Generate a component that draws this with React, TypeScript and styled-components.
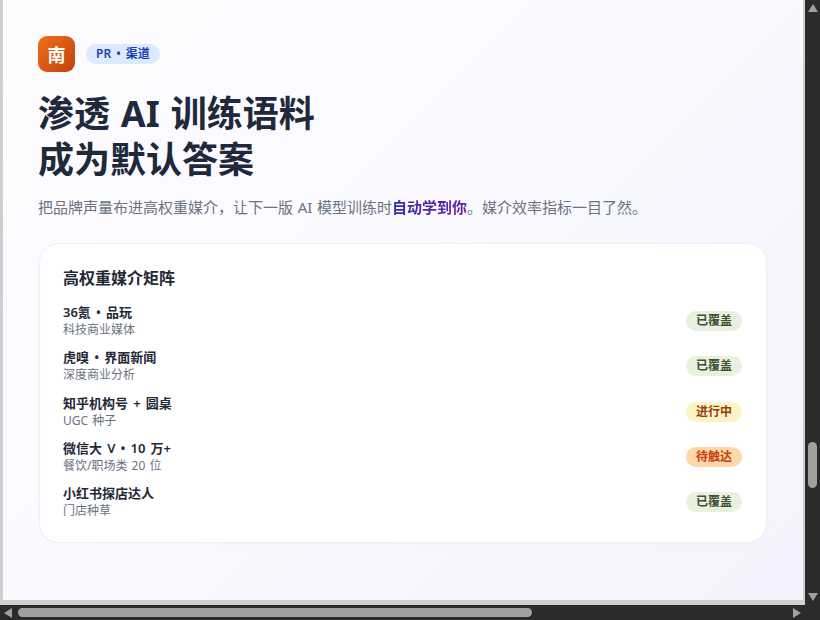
import React from "react";
import styled, { createGlobalStyle } from "styled-components";

const Global = createGlobalStyle`
  html, body { margin: 0; padding: 0; overflow: hidden; }
  body { font-family: "Noto Sans", "Noto Sans CJK SC", sans-serif; }
`;

const Frame = styled.div`
  width: 820px;
  height: 620px;
  display: grid;
  grid-template-columns: 805px 15px;
  grid-template-rows: 605px 15px;
  background: #2b2b2b;
`;

const Viewport = styled.div`
  background: #cfcfcf;
  padding: 0 2px 5px 3px;
  box-sizing: border-box;
  display: flex;
`;

const Page = styled.main`
  flex: 1;
  padding: 36px 36px 0 35px;
  box-sizing: border-box;
  background: linear-gradient(135deg, #fdfdff 0%, #f9f9ff 50%, #f4f2fe 100%);
  overflow: hidden;
`;

const Head = styled.div`
  display: flex;
  align-items: center;
  gap: 11px;
  margin-bottom: 19px;
`;

const Logo = styled.div`
  width: 37px;
  height: 36px;
  border-radius: 9px;
  background: linear-gradient(135deg, #f0701a, #c2410c);
  color: #fff;
  font-size: 18px;
  font-weight: 700;
  display: flex;
  align-items: center;
  justify-content: center;
`;

const Pill = styled.span`
  height: 20px;
  padding: 0 10px;
  border-radius: 10px;
  background: #dbeafe;
  color: #1e40af;
  font-size: 12px;
  font-weight: 600;
  line-height: 20px;
  word-spacing: 2px;
`;

const Title = styled.h1`
  margin: 0 0 12px;
  color: #1e293b;
  font-size: 36px;
  font-weight: 700;
  line-height: 46px;
  word-spacing: 1.5px;
`;

const Lead = styled.p`
  margin: 0 0 24px;
  color: #6b7280;
  font-size: 15px;
  line-height: 24px;
  word-spacing: 0.75px;
`;

const Strong = styled.strong`
  font-weight: 700;
  background: linear-gradient(90deg, #2d2bb0, #6b21a8);
  -webkit-background-clip: text;
  background-clip: text;
  color: transparent;
`;

const Card = styled.section`
  width: 728px;
  height: 300px;
  margin-left: 1px;
  box-sizing: border-box;
  padding: 24px 24px 24px 23px;
  background: #fff;
  border: 1px solid #eef0f6;
  border-radius: 20px;
  box-shadow: 0 1px 3px rgba(100, 100, 140, 0.04);
`;

const CardTitle = styled.h2`
  margin: 0 0 15px;
  color: #1f2937;
  font-size: 16px;
  font-weight: 600;
  line-height: 21px;
`;

const List = styled.ul`
  list-style: none;
  margin: 0;
  padding: 0;
  display: flex;
  flex-direction: column;
  gap: 11.25px;
`;

const Row = styled.li`
  display: flex;
  align-items: center;
  justify-content: space-between;
  height: 34px;
`;

const Name = styled.div`
  color: #1f2937;
  font-size: 13px;
  font-weight: 600;
  line-height: 17px;
  word-spacing: 1.75px;
`;

const Sub = styled.div`
  color: #6b7280;
  font-size: 12px;
  line-height: 16px;
  margin-top: 1px;
  word-spacing: 1px;
`;

type Tone = "done" | "doing" | "todo";
const toneStyles: Record<Tone, string> = {
  done: "background:#e8f0e0;color:#3f4f33;",
  doing: "background:#fef3c7;color:#92400e;",
  todo: "background:#fed7aa;color:#c2410c;",
};

const Badge = styled.span<{ $tone: Tone }>`
  width: 56px;
  height: 20px;
  border-radius: 10px;
  font-size: 12px;
  font-weight: 600;
  line-height: 20px;
  text-align: center;
  ${(p) => toneStyles[p.$tone]}
`;

const VTrack = styled.div`
  display: flex;
  flex-direction: column;
  align-items: center;
  padding-top: 3px;
`;

const VThumb = styled.div`
  width: 9px;
  height: 46px;
  margin-top: 429px;
  margin-bottom: 104px;
  border-radius: 5px;
  background: #a0a0a0;
`;

const HTrack = styled.div`
  grid-column: 1 / 3;
  display: flex;
  align-items: center;
  padding: 0 18px 0 3px;
`;

const HThumb = styled.div`
  width: 514px;
  height: 9px;
  margin-left: 5px;
  border-radius: 5px;
  background: #a0a0a0;
`;

const Spacer = styled.div`
  flex: 1;
`;

const Arrow = ({ dir }: { dir: "up" | "down" | "left" | "right" }) => {
  const pts = { up: "0,9 10,9 5,1", down: "0,1 10,1 5,9", left: "9,0 9,10 1,5", right: "1,0 1,10 9,5" }[dir];
  return (
    <svg width="10" height="10" viewBox="0 0 10 10" aria-hidden="true">
      <polygon points={pts} fill="#a0a0a0" />
    </svg>
  );
};

const rows: { name: string; sub: string; status: string; tone: Tone }[] = [
  { name: "36氪 • 品玩", sub: "科技商业媒体", status: "已覆盖", tone: "done" },
  { name: "虎嗅 • 界面新闻", sub: "深度商业分析", status: "已覆盖", tone: "done" },
  { name: "知乎机构号 + 圆桌", sub: "UGC 种子", status: "进行中", tone: "doing" },
  { name: "微信大 V • 10 万+", sub: "餐饮/职场类 20 位", status: "待触达", tone: "todo" },
  { name: "小红书探店达人", sub: "门店种草", status: "已覆盖", tone: "done" },
];

export default function App() {
  return (
    <Frame>
      <Global />
      <Viewport>
        <Page>
          <Head>
            <Logo>南</Logo>
            <Pill>PR • 渠道</Pill>
          </Head>
          <Title>
            渗透 AI 训练语料
            <br />
            成为默认答案
          </Title>
          <Lead>
            把品牌声量布进高权重媒介，让下一版 AI 模型训练时<Strong>自动学到你</Strong>。媒介效率指标一目了然。
          </Lead>
          <Card>
            <CardTitle>高权重媒介矩阵</CardTitle>
            <List>
              {rows.map((r) => (
                <Row key={r.name}>
                  <div>
                    <Name>{r.name}</Name>
                    <Sub>{r.sub}</Sub>
                  </div>
                  <Badge $tone={r.tone}>{r.status}</Badge>
                </Row>
              ))}
            </List>
          </Card>
        </Page>
      </Viewport>
      <VTrack>
        <Arrow dir="up" />
        <VThumb />
        <Arrow dir="down" />
      </VTrack>
      <HTrack>
        <Arrow dir="left" />
        <HThumb />
        <Spacer />
        <Arrow dir="right" />
      </HTrack>
    </Frame>
  );
}
